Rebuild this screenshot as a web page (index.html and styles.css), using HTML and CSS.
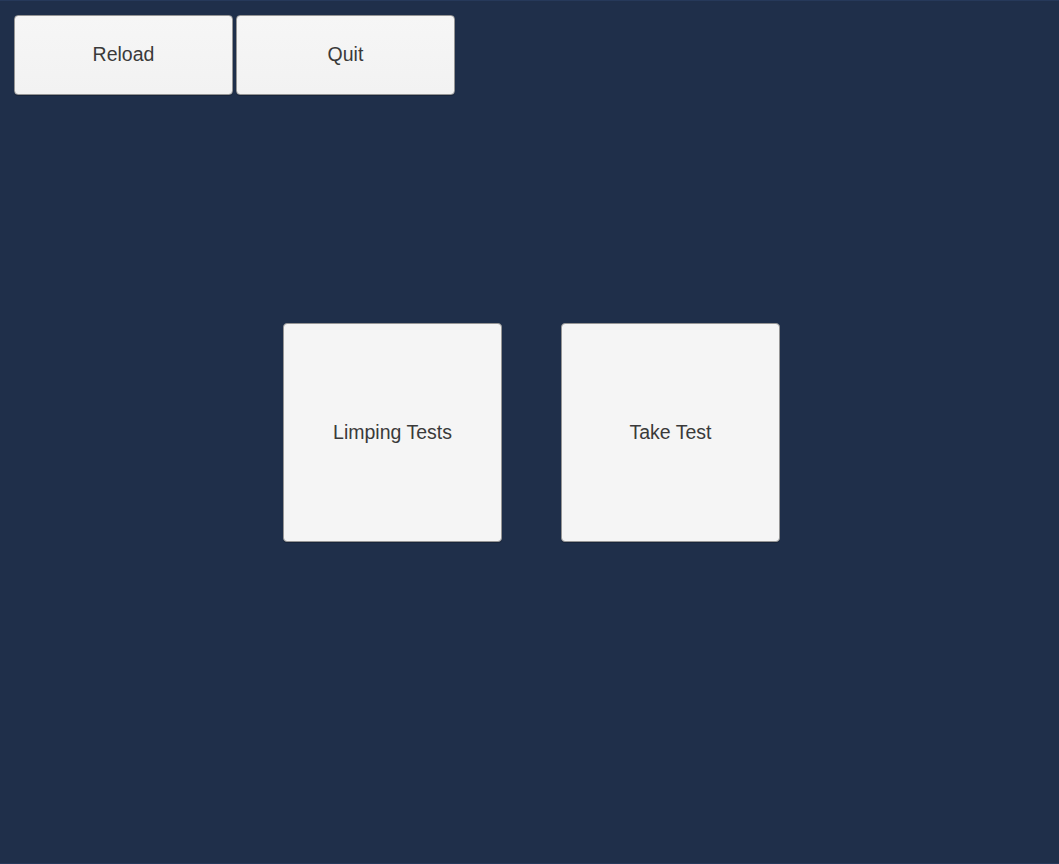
FILE: index.html
```html
<!DOCTYPE html>
<html>
<head>
<meta charset="utf-8">
<link rel="stylesheet" href="styles.css">
</head>
<body>
<div class="page">
  <div class="toolbar">
    <button class="btn btn-bar">Reload</button>
    <button class="btn btn-bar">Quit</button>
  </div>
  <div class="center">
    <button class="btn btn-tile">Limping Tests</button>
    <button class="btn btn-tile">Take Test</button>
  </div>
</div>
</body>
</html>
```
FILE: styles.css
```css
html, body {
  margin: 0;
  padding: 0;
  height: 100%;
}
body {
  background: #1f2f4a;
  font-family: "Liberation Sans", Arial, sans-serif;
  overflow: hidden;
}
.page {
  height: 864px;
  box-sizing: border-box;
  border-top: 1px solid #26395a;
  border-bottom: 1px solid #26395a;
}
.toolbar {
  display: flex;
  gap: 3px;
  padding: 14px 0 0 14px;
}
.btn {
  box-sizing: border-box;
  background: linear-gradient(#f6f6f6, #f2f2f2);
  border: 1px solid #959595;
  border-radius: 4px;
  color: #3a3a3a;
  font-family: "Liberation Sans", Arial, sans-serif;
  font-size: 19.5px;
  padding: 0;
  display: flex;
  align-items: center;
  justify-content: center;
  box-shadow: 0 1px 0 rgba(0,0,0,0.2);
}
.btn-bar {
  width: 219px;
  height: 80px;
  padding-bottom: 1px;
}
.center {
  display: flex;
  justify-content: center;
  gap: 59px;
  padding-left: 4px;
  margin-top: 228px;
}
.btn-tile {
  width: 219px;
  height: 219px;
  background: #f5f5f5;
}
```
